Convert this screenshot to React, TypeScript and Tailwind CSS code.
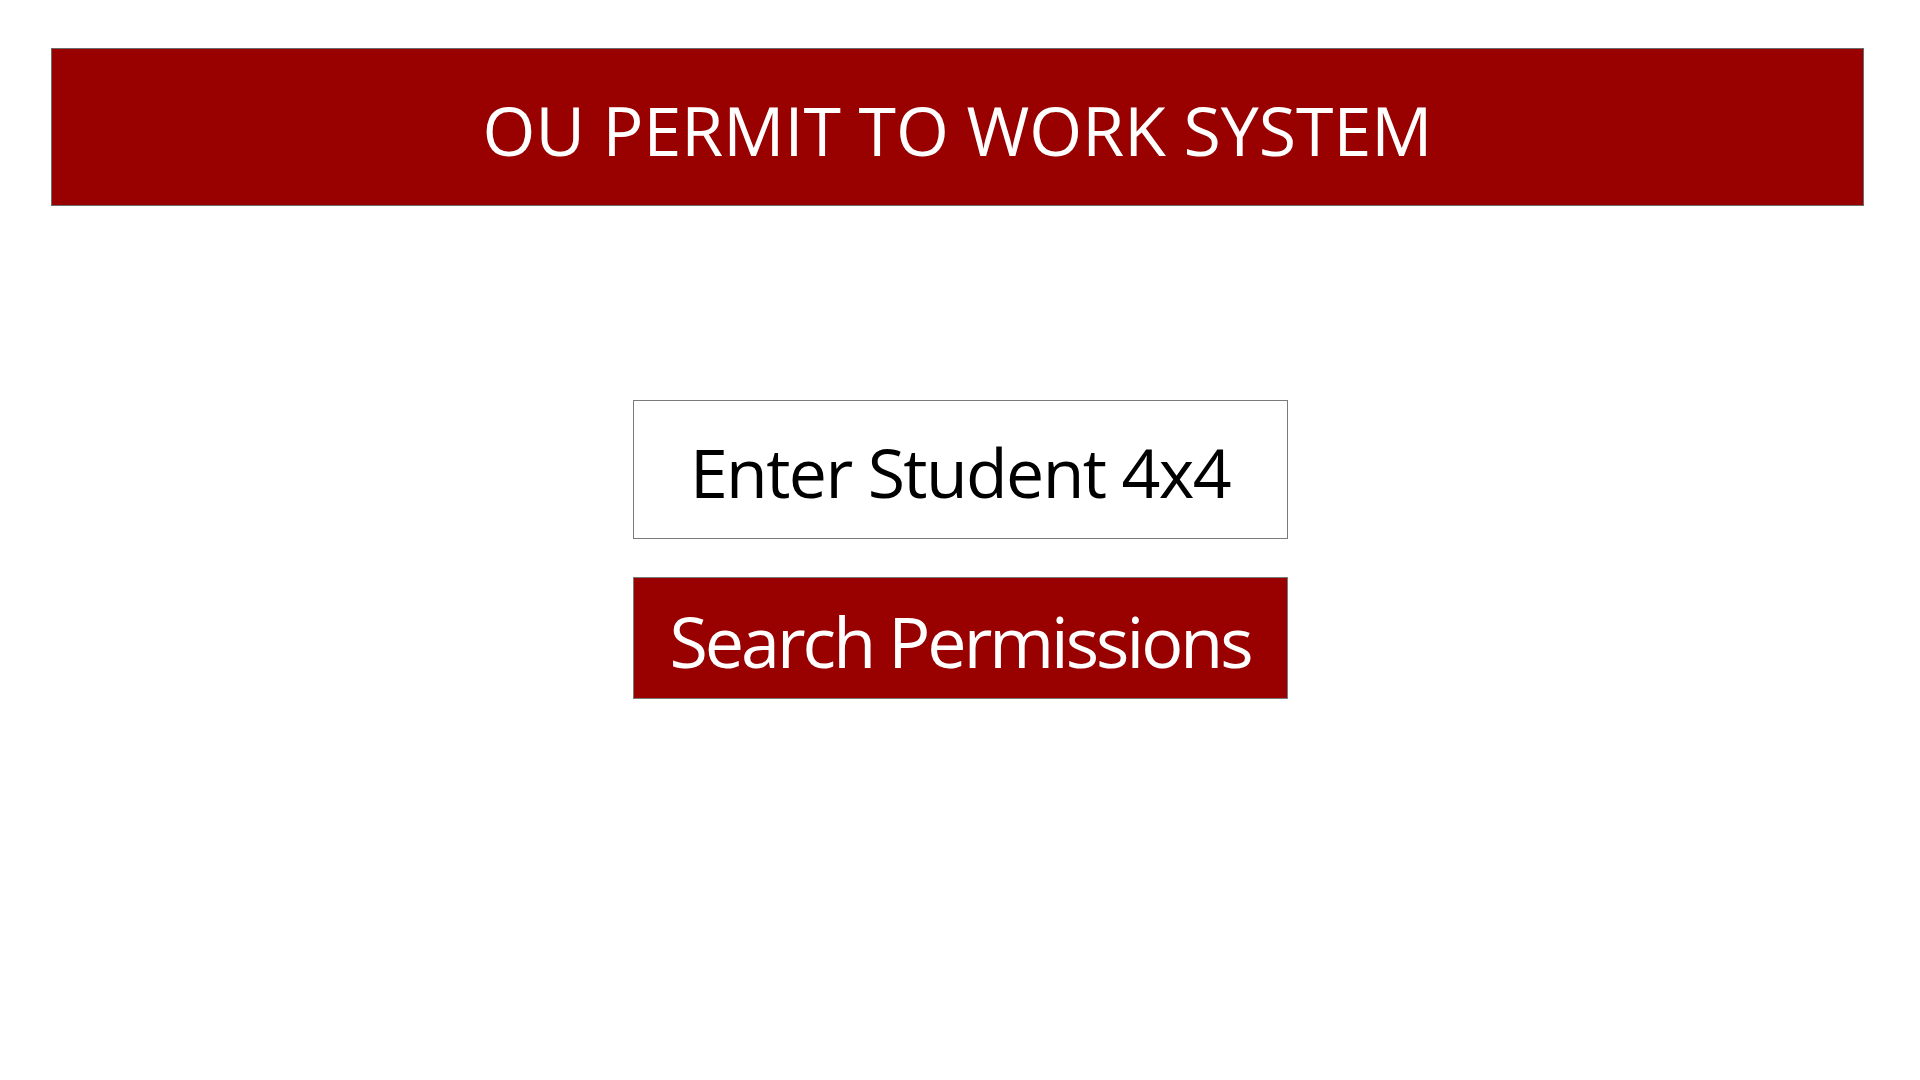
import React from "react";

export default function App() {
  return (
    <div className="min-h-screen w-full bg-white" style={{ fontFamily: '"Open Sans", "Noto Sans", sans-serif' }}>
      <div className="pt-[48px] pl-[51px] pr-[56px]">
        <header className="flex h-[158px] items-center justify-center border border-[#6b6b6b] bg-[#990000] pt-[6px]">
          <h1 className="text-[68px] font-normal leading-none tracking-[0px] text-white">OU PERMIT TO WORK SYSTEM</h1>
        </header>
      </div>
      <div className="mt-[194px] flex flex-col items-center gap-[38px]">
        <input
          type="text"
          placeholder="Enter Student 4x4"
          className="h-[139px] w-[655px] border border-[#7a7a7a] bg-white pt-[4px] text-center text-[68px] tracking-[-1.6px] text-black outline-none placeholder:text-black"
        />
        <button className="flex h-[122px] w-[655px] items-center justify-center border border-[#7a7a7a] bg-[#990000] pt-[6px] text-[70px] leading-none tracking-[-3px] text-white">
          Search Permissions
        </button>
      </div>
    </div>
  );
}
